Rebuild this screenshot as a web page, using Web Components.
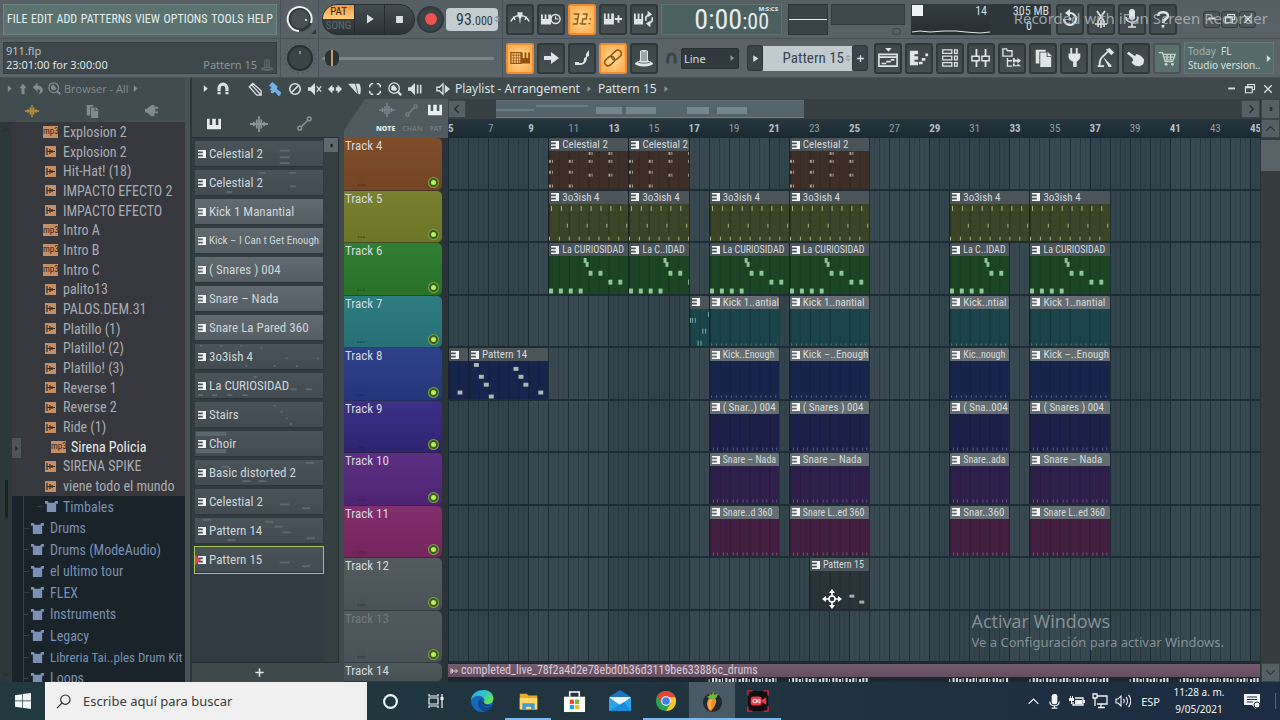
<!DOCTYPE html>
<html lang="es">
<head>
<meta charset="utf-8">
<title>911.flp - Playlist</title>
<style>
  html, body { margin: 0; height: 100%; background: #3c474a; }
  body { font-family: "Noto Sans", "Open Sans", sans-serif; overflow: hidden; }
</style>
</head>
<body>
<studio-app></studio-app>
<script>
const NARROW = '"Roboto Condensed", "Liberation Sans Narrow", "Liberation Sans", sans-serif';
const UI = '"Noto Sans", "Open Sans", sans-serif';
const BASE = `*{box-sizing:border-box} button,input,select{font:inherit;color:inherit;margin:0;padding:0;border:0;background:none} button{display:flex;align-items:center;justify-content:center}`;

function define(name, css, render) {
  customElements.define(name, class extends HTMLElement {
    constructor() { super(); this.attachShadow({ mode: 'open' }); }
    connectedCallback() {
      this.shadowRoot.innerHTML = `<style>${BASE}${css}</style>${render(this)}`;
    }
  });
}

/* ---------- icons: [viewBox size, markup] ---------- */
const S = 'fill="none" stroke="currentColor"';
const ICONS = {
  right: [16, '<path d="M5 2l7 6-7 6z"/>'],
  play: [16, '<path d="M4 2l9 6-9 6z"/>'],
  stop: [16, '<path d="M3 3h10v10H3z"/>'],
  up: [16, '<path d="M8 1l5 6H10v8H6V7H3z"/>'],
  undo: [16, '<path d="M7 1v3.500c5 0 7 3 6 7-.5 2-2 3-5 3.500 3-3 2.500-6-1-6V12L1 6.500z"/>'],
  zoom: [16, `<circle cx="7" cy="7" r="6" ${S} stroke-width="1.500"/><path d="M11 11l4 4" ${S} stroke-width="2.500"/><path d="M3.500 7c0-2 1.500-3.500 3.500-3.500L10.500 8c-1 3-7 3-7-1z"/>`],
  wave: [16, `<path d="M0 8h16M3.500 6v4M6 4v8M8 1v14M10 4v8M12.500 6v4" ${S} stroke-width="1.600"/>`],
  file: [16, '<path d="M2 1h8l-1 2H6v10H2zM7 4h4v4h4v8H7zM12 3l4 4h-4z"/>'],
  plugin: [16, '<path d="M0 6h2l5-4h3v2h4v2h-3v3h3v2h-4v3H7l-5-4H0z"/>'],
  magnet: [16, `<path d="M3.500 14V7a4.500 4.500 0 0 1 9 0v7" ${S} stroke-width="3.600"/><path d="M1 11h5M10 11h5" stroke="#3c474a" stroke-width="1"/>`],
  pencil: [16, `<path d="M1.500 5.500l4-4L15 10v5h-5zM4 3l10 11M2 5l4-3" ${S} stroke-width="1.500"/>`],
  brush: [16, '<path d="M1 4l4-4 6 5-1 3 5 4-1 3-2 1-4-5-3 2-2-1 1-3-2 0 2-3z"/>'],
  slash: [16, `<circle cx="8" cy="8" r="6" ${S} stroke-width="1.800"/><path d="M4 12l8-8" ${S} stroke-width="1.800"/>`],
  mute: [16, `<path d="M0 6h3l5-5v14l-5-5H0z"/><path d="M10 5l5 6M15 5l-5 6" ${S} stroke-width="1.500"/>`],
  slip: [16, '<path d="M0 8l5-5v3h2v4H5v3zM16 8l-5-5v3H9v4h2v3z"/>'],
  clipwave: [16, `<path d="M2 2v12M2 8h13M5 4v8M11 4l4 4-4 4" ${S} stroke-width="2"/>`],
  slice: [16, '<path d="M0 2h8l3 12zM9 2h4c2 3 2 8 1 12h-2z"/>'],
  select: [16, `<path d="M2 6V4l2-2h2M10 2h2l2 2v2M14 10v2l-2 2h-2M6 14H4l-2-2v-2" ${S} stroke-width="1.800"/>`],
  playback: [16, `<path d="M0 6h3l5-5v14l-5-5H0z"/><path d="M11 3v10M14.500 3v10" ${S} stroke-width="1.800"/>`],
  speaker: [16, `<path d="M1 6h3l4-4v12l-4-4H1z" ${S} stroke-width="1.500"/><path d="M10 3l6 5-6 5z"/>`],
  piano: [16, '<path d="M0 2h3v7h3V2h4v7h3V2h3v12H0z"/>'],
  auto: [16, `<path d="M5 11l6-6" ${S} stroke-width="1.600"/><circle cx="3" cy="13" r="2" ${S} stroke-width="1.500"/><circle cx="13" cy="3" r="2" ${S} stroke-width="1.500"/>`],
  metro: [24, `<path d="M1 15c2-4 5-7 9-7M23 15c-2-4-5-7-9-7M4 9l2 4M20 9l-2 4" ${S} stroke-width="1.800"/><path d="M9 4h6v4l-2 3-1 8-1-8-2-3z"/>`],
  pianoclock: [22, `<path d="M0 6h2v5h2V6h2v5h2V6h3v11H0z"/><circle cx="16" cy="11" r="5" ${S} stroke-width="1.600"/><path d="M16 8v3h3" ${S} stroke-width="1.200"/>`],
  count: [24, `<path d="M2 6h6l-1 6H3M7 12l-1 6H1M9 17.500h2M13 6h5l-1 6h-4l-1 6h5M20 17.500h2M21 12h2" ${S} stroke-width="1.700"/>`],
  pianoplus: [22, `<path d="M1 5h2v6h2V5h2v6h2V5h3v12H1z"/><path d="M17 7v8M13 11h8" ${S} stroke-width="2"/>`],
  pianoloop: [22, `<path d="M0 5h2v6h2V5h2v6h2V5h2v12H0z"/><path d="M13 13V9l3-3M20 9v4l-3 3" ${S} stroke-width="1.800"/><path d="M15 2l5 4-5 3zM18 13v7l-5-4z"/>`],
  typing: [22, `<path d="M1 5h11v12H1z" ${S} stroke-width="1.400"/><path d="M2 8h9M2 11h9M2 14h9M4 6v11M7 6v11M9.500 6v11" ${S} stroke-width=".8"/><path d="M12 5h2v6h2V5h2v6h2V5h2v12H12z"/>`],
  arrow: [20, '<path d="M3 8h7V4l8 6-8 6v-4H3z"/>'],
  slide: [20, '<path d="M6 15h4c2-1 2-3 2-5l2-1V6l3-4v6l-2 1c0 4-2 8-7 8H5zM3 14h4v3H3z"/>'],
  link: [20, `<g transform="rotate(-42 10 10)" ${S} stroke-width="1.600"><rect x="0" y="6.500" width="11" height="7" rx="3.500"/><rect x="9" y="6.500" width="11" height="7" rx="3.500"/></g>`],
  hat: [20, '<ellipse cx="10" cy="15.500" rx="9" ry="3"/><path d="M6 3c1-1.500 7-1.500 8 0v9l2 2c-2 2-10 2-12 0l2-2z"/><path d="M8 3v10M10 4v9M12 3v10M4 14c2 1.500 10 1.500 12 0" fill="none" stroke="#40494d" stroke-width=".8"/>'],
  back: [20, `<path d="M10 4a6 6 0 1 1-6 6" ${S} stroke-width="2.200"/><path d="M10 0v8L5 4z"/><circle cx="10" cy="10" r="1.500"/>`],
  cut: [20, `<path d="M6 2l7 10M14 2L7 12" ${S} stroke-width="1.800"/><path d="M4 15h12M7 12v6M10 11v8M13 12v6" ${S} stroke-width="1.600"/>`],
  mic: [20, `<rect x="7" y="0" width="6" height="11" rx="3"/><path d="M4 8c0 7 12 7 12 0M10 13v5M6 18h8" ${S} stroke-width="1.600"/>`],
  help: [20, `<path d="M5 7c0-5 10-5 10 0 0 3-5 3-5 7M10 16v2.500" ${S} stroke-width="2.600"/>`],
  playlist: [22, `<path d="M1 7h20v13H1zM1 10h20M4 17h5M9 15h5M14 13h4" ${S} stroke-width="1.800"/><path d="M8 0h7l-3.500 4z"/>`],
  roll: [22, '<path d="M1 3h9v4H6v2h4v4H6v2h4v4H1zM11 15h4v3h-4zM14 11h4v3h-4zM18 6h3v3h-3z"/>'],
  rack: [22, `<path d="M3 2h10v4H3zM3 9h10v4H3zM3 16h10v4H3zM16 2h3v4h-3zM16 9h3v4h-3zM16 16h3v4h-3z" ${S} stroke-width="1.400"/>`],
  mixer: [22, `<path d="M6 1v20M16 1v20" ${S} stroke-width="2"/><path d="M1 9h8v5H1zM12 9h8v5h-8z" fill="#40494d" stroke="currentColor" stroke-width="1.600"/>`],
  tree: [22, `<path d="M1 1h4l1 2h5v6H1zM6 11v9h5M6 14h5" ${S} stroke-width="1.500"/><path d="M12 11h2v2h3v-2l4 3-4 3v-2h-3v1h-2zM12 17h2v2h3v-2l4 3h-9z"/>`],
  copy: [22, '<path d="M3 2h11v2H7v13H3zM8 5h7v5h5v11H8zM16 4l5 5h-5z"/>'],
  plug: [22, '<path d="M7 0h2v6h4V0h2v6h3v3c0 4-3 5-4 6v6h-4v-6c-2-1-5-2-5-6V6h2z"/>'],
  mop: [22, `<path d="M3 20h7M5 19c0-6 2-9 5-11l4-4" ${S} stroke-width="2"/><path d="M12 2l4-2 5 5-3 3zM9 10l9 9v2h-3z"/>`],
  hand: [22, '<path d="M1 6l2-2 7 5 1-2c4 0 7 3 9 6l-1 5-4 2c-4 0-7-1-9-5l2-1-1-3z"/>'],
  cart: [22, `<path d="M2 5h4l3 10h9M6.500 7H20l-2 6H9M8 10h11M11 7v6M15 7v6" ${S} stroke-width="1.400"/><circle cx="10" cy="18" r="1.600"/><circle cx="17" cy="18" r="1.600"/>`],
  pattern: [10, '<path d="M0 0h10v10H0V8h6V6H0V4h6V2H0z"/>'],
  drum: [14, '<path d="M0 1h3l1 2h6l1-2h3v3h-2v9H2V4H0z"/>'],
  updown: [10, '<path d="M1 4l4-3 4 3zM1 6h8L5 9z"/>'],
  min: [16, '<path d="M3 6h9v2.500H3z"/>'],
  restore: [16, `<path d="M5 5V2h9v7h-3M2 5h9v8H2z" ${S} stroke-width="1.600"/><path d="M2 5h9v2H2z"/>`],
  close: [16, `<path d="M3 3l10 10M13 3L3 13" ${S} stroke-width="1.800"/>`],
  left: [16, `<path d="M10 3L5 8l5 5" ${S} stroke-width="1.800"/>`],
  next: [16, `<path d="M6 3l5 5-5 5" ${S} stroke-width="1.800"/>`],
  chevup: [16, `<path d="M2 11l6-6 6 6" ${S} stroke-width="1.500"/>`],
  chevdown: [16, `<path d="M2 5l6 6 6-6" ${S} stroke-width="1.500"/>`],
  dot: [16, '<path d="M6 5h4v6H6z"/>'],
  plus: [16, `<path d="M8 2v12M2 8h12" ${S} stroke-width="2.400"/>`],
  move: [20, '<path d="M10 2v16M2 10h16" stroke="#fff" stroke-width="1.600"/><path d="M10 0l3 4H7zM10 20l3-4H7zM0 10l4-3v6zM20 10l-4-3v6z"/><circle cx="10" cy="10" r="3" fill="#27343b" stroke="#fff" stroke-width="1.500"/>'],
  windows: [16, '<path d="M0 2.200L7 1.200v6.300H0zM7.700 1.100L16 0v7.500H7.700zM0 8.300h7v6.400L0 13.700zM7.700 8.300H16V16l-8.300-1.200z"/>'],
  search: [16, `<circle cx="10" cy="6" r="5" ${S} stroke-width="1.200"/><path d="M6.500 9.500L1 15" ${S} stroke-width="1.300"/>`],
  cortana: [16, `<circle cx="8" cy="8" r="6" ${S} stroke-width="2"/>`],
  taskview: [16, `<path d="M1 1v2h9V1M1 15v-2h9v2M1 5h9v6H1zM14 1v14" ${S} stroke-width="1.200"/><path d="M12.500 4h3v3h-3z"/>`],
  edge: [24, '<defs><linearGradient id="a" x1="0" y1="0" x2="1" y2=".6"><stop offset="0" stop-color="#2aa9dd"/><stop offset=".6" stop-color="#35c6c4"/><stop offset="1" stop-color="#6be04e"/></linearGradient></defs><circle cx="12" cy="12" r="11" fill="#1569b8"/><path d="M1 11C2-1 22-3 23.500 9c0 5-4 6.500-7 6-4-.6-2-2.500-2-4-.5-5-10-6-13.500 0z" fill="url(#a)"/><path d="M9 11c-3 5 1 11 7 11.500 3-1 5-3 6-5-5 2-10 0-10-5 0-1 .6-2 1-2.500-1-1-3-.5-4 1z" fill="#12488f"/><path d="M12 12c0 4 4 6 9 5l1 1-2-2c-3 .6-6-.6-6-2.500z" fill="#203945"/>'],
  folder: [24, '<path d="M2 3h8l2 2h10v16H2z" fill="#e7a92f"/><path d="M2 8h20v13H2z" fill="#ffd868"/><path d="M5 21v-7h14v7h-4v-3H9v3z" fill="#3f98d8"/>'],
  store: [24, '<path d="M7 7V2h10v5" fill="none" stroke="#fff" stroke-width="1.600"/><path d="M1 7h22v16H1z" fill="#fff"/><path d="M7 10h4.500v4.500H7z" fill="#e8502d"/><path d="M12.500 10H17v4.500h-4.500z" fill="#7db82c"/><path d="M7 15.500h4.500V20H7z" fill="#2a9de0"/><path d="M12.500 15.500H17V20h-4.500z" fill="#f6b91f"/>'],
  mail: [24, '<path d="M1 8l11-7 11 7v14H1z" fill="#1c74c4"/><path d="M2 8h20v10H2z" fill="#fff"/><path d="M1 8l11 8 11-8v14H1z" fill="#2ea3ea"/><path d="M1 22L16 13l7 9z" fill="#1a8bd8"/><path d="M2 8h20l-10 7z" fill="#e8f4fb"/>'],
  chrome: [24, '<circle cx="12" cy="12" r="11" fill="#2fa14f"/><path d="M2.500 6.500a11 11 0 0 1 19 0L22 8H12l-5 6z" fill="#e04536"/><path d="M22 7.500A11 11 0 0 1 12 23l5-8-1-7.500z" fill="#fbc52d"/><circle cx="12" cy="12" r="5.300" fill="#fff"/><circle cx="12" cy="12" r="4.200" fill="#3f7fe8"/>'],
  fruit: [24, '<circle cx="12" cy="13" r="10" fill="#1f2a30"/><path d="M8 9c3-3 8-1 8 3-1 4-3 8-6 10-4-3-5-9-2-13z" fill="#f58a22"/><path d="M9 11c1-2 2-2 3-2-2 4-2 8-1 13-4-4-4-8-2-11z" fill="#ffb652"/><path d="M9 3l2 2 2-3 1 3 4-1-2 4-4 2-3-1-3-2 3-1z" fill="#6fb53c"/>'],
  recorder: [24, '<rect x="1" y="1" width="22" height="22" rx="2" fill="#120d0f"/><path d="M1 6V1h5M18 1h5v5M23 18v5h-5M6 23H1v-5" fill="none" stroke="#d92b3a" stroke-width="1.500"/><rect x="4" y="7" width="12" height="10" rx="3" fill="#ef3548"/><path d="M16 11l5-3v8l-5-3z" fill="#ef3548"/><circle cx="8.500" cy="12" r="2" fill="none" stroke="#fff" stroke-width="1.100"/><path d="M10 12l4-2v4z" fill="none" stroke="#fff" stroke-width="1"/>'],
  traymic: [16, `<rect x="5" y="0" width="6" height="11" rx="2.500"/><path d="M3 8c0 6 10 6 10 0M8 12v3M5 15h6" ${S} stroke-width="1.200"/>`],
  battery: [16, `<path d="M6 5h8v7H4V9" ${S} stroke-width="1.300"/><path d="M6 7h7v4H6zM14 7h2v3h-2zM1 3h1v2h1V3h1v2h1v3H3v3H2V8H0V5h1z"/>`],
  monitor: [16, `<path d="M5 3h10v8H5M9 11v3M6 14.500h7M1 1h4v4H1zM3 5v8" ${S} stroke-width="1.300"/>`],
  volume: [16, `<path d="M1 6h2l3-3v10L3 10H1zM8.500 6c1 1 1 3 0 4M11 4c2 2 2 6 0 8M13.500 2c3 3 3 9 0 12" ${S} stroke-width="1.100"/>`],
  notify: [16, '<path d="M0 1h16v11h-4v4l-4-4H0z"/><path d="M3 4h10M3 6.500h10M3 9h6" stroke="#1d2c42" stroke-width="1"/><circle cx="13" cy="12" r="3" stroke="#1d2c42"/>'],
};

define('fl-icon', `:host{display:block;width:var(--s,16px);height:var(--s,16px);flex:none} svg{display:block;width:100%;height:100%;fill:currentColor}`, el => {
  const [box, body] = ICONS[el.getAttribute('name')];
  return `<svg viewBox="0 0 ${box} ${box}" aria-hidden="true">${body}</svg>`;
});
const icon = (name, size = 14, extra = '') => `<fl-icon name="${name}" style="--s:${size}px;${extra}"></fl-icon>`;

define('tool-button', `
  :host{display:block;width:28px;height:31px;flex:none}
  button{width:100%;height:100%;border:2px solid #2f383b;border-radius:3px;background:linear-gradient(#3d4649,#454f52);color:#dde5e6}
  :host([on]) button{border-color:#ee8a34;background:radial-gradient(#ffe0a0,#fdb356 75%);color:#93520d}
  :host([soft]) button{background:#5b716f;border-color:#465558;color:#c2d3d0}`,
  el => `<button aria-label="${el.getAttribute('label')}">${icon(el.getAttribute('icon'), 20)}</button>`);
const tool = (i, label, attr = '') => `<tool-button icon="${i}" label="${label}" ${attr}></tool-button>`;

/* ---------- top toolbar ---------- */
define('knob-dial', `:host{display:block;width:32px;height:34px} svg{display:block}`, el =>
  el.hasAttribute('ring')
  ? `<svg width="32" height="34" role="img" aria-label="Volume"><circle cx="16" cy="17" r="11" fill="#475154" stroke="#2e3739" stroke-width="3"/><path d="M15 29a12 12 0 1 1 12-8" fill="none" stroke="#eef2f2" stroke-width="2"/><circle cx="22" cy="18" r="1" fill="#fff"/><path d="M32 27v5h-5z" fill="#2e3739"/></svg>`
  : `<svg width="32" height="34" role="img" aria-label="Pitch"><circle cx="16" cy="17" r="15" fill="none" stroke="#353e41" stroke-width="1" stroke-dasharray="1 4"/><circle cx="16" cy="17" r="12" fill="#394245" stroke="#272f32" stroke-width="2"/><path d="M16 10v3" stroke="#d5dcdc" stroke-width="1"/></svg>`);

define('menu-bar', `
  :host{display:flex;align-items:center;justify-content:space-between;min-width:0;height:31px;padding:0 3px;background:#5a7370;border:1px solid #6f8582;color:#e6eded;font:12px ${NARROW}}
  button{line-height:20px}`,
  () => ['FILE', 'EDIT', 'ADD', 'PATTERNS', 'VIEW', 'OPTIONS', 'TOOLS', 'HELP'].map(t => `<button>${t}</button>`).join(''));

define('top-toolbar', `
  :host{display:grid;grid-template-columns:281px 38px 184px minmax(0,1fr);grid-template-rows:39px 39px;height:78px;flex:none;background:linear-gradient(#566064,#5b6569);color:#d9e0e1;position:relative;border-bottom:1px solid #2f383b}
  .cell{display:flex;align-items:center;padding:0 3px;min-width:0;border-right:1px solid #48525a;border-bottom:1px solid #48525a}
  .rest{border-right:0;gap:3px}
  menu-bar{flex:1}
  .info{flex:1;height:32px;background:#3e474b;border:1px solid #353e41;padding:1px 2px 0;font-size:11px;line-height:14px;color:#b9c3c6}
  .info p{margin:0}.info b{font-weight:400;color:#dce3e5}
  .info .hint{display:flex}.info .hint b{flex:1}.info .hint span{color:#89959a;padding-right:3px}.info fl-icon{color:#5c676b}
  .pill{display:flex;width:93px;height:31px;border-radius:15px;overflow:hidden;background:linear-gradient(#434c50,#2c3437);border:1px solid #272f32}
  .pill button{flex:1;border-left:1px solid #242c2f}
  .mode{display:flex;flex-direction:column;width:31px;font:11px/15px ${NARROW};text-align:center}
  .mode span{height:14px;line-height:14px}.mode .on{background:linear-gradient(#f3973f,#ffd080);color:#3a2508}.mode .off{color:#5d686c}
  .rec{width:27px;height:27px;border-radius:50%;background:#3a4347;border:2px solid #30383b;margin-left:2px}
  .rec i{width:12px;height:12px;border-radius:50%;background:#ef5350}
  .tempo{display:flex;align-items:center;justify-content:space-between;width:52px;height:23px;margin-left:2px;border-radius:4px;background:#c3cdd1;color:#333d42;padding:0 1px 0 10px;font:16px ${NARROW}}
  .tempo small{font-size:12px}
  .clock{width:121px;height:31px;background:#4b6061;border:1px solid #5f7372;display:flex;justify-content:flex-end;padding-right:12px;color:#e4ecec;font:28px/30px ${NARROW};position:relative}
  .clock small{font-size:22px;line-height:33px}
  .clock em{position:absolute;right:3px;top:0;font:700 6px/8px ${UI}}
  .scope{width:40px;height:31px;background:#3a4347;border:1px solid #2f373a;display:flex;align-items:center;margin-left:3px}
  .scope i{height:1px;flex:1;background:#e3e9e9}
  .meter{width:74px;height:31px;display:flex;flex-direction:column;align-items:flex-end;justify-content:space-between}
  .meter i{width:74px;height:21px;background:#3f494c;border:1px solid #333b3e}
  .meter b{width:9px;height:7px;border-radius:5px;border:1px solid #394245;margin-right:4px}
  .cpu{width:140px;height:31px;margin:0 2px 0 3px;background:#2d363a;display:grid;grid-template-columns:1fr 60px;color:#d5dcdd;font:12px/15px ${NARROW};text-align:right}
  .cpu div:first-child{background:linear-gradient(#333c40,#262e32);padding-right:3px;position:relative;margin-right:1px}
  .cpu div:last-child{padding-right:2px}.cpu p{margin:0}.cpu .zero{padding-right:17px}
  .cpu svg{position:absolute;left:1px;top:1px}
  .win{display:flex;gap:1px;margin-left:23px}
  .win button{width:17px;height:17px;border-radius:3px;border:1px solid #343d40;background:#4b5558;color:#e0e6e6}
  .fader{flex:1;display:flex;align-items:center}
  .fader input{-webkit-appearance:none;appearance:none;width:172px;height:16px}
  .fader input::-webkit-slider-runnable-track{height:3px;background:#7b8588;border-radius:2px}
  .fader input::-webkit-slider-thumb{-webkit-appearance:none;width:14px;height:16px;margin-top:-7px;border-radius:6px;background:linear-gradient(90deg,#2c3336 6px,#c99b64 6px 8px,#2c3336 8px)}
  .snap{display:flex;align-items:center;gap:3px;margin-left:4px;color:#3b4548}
  .drop{position:relative;display:flex;align-items:center;color:#8b969a}
  select{-webkit-appearance:none;appearance:none;width:58px;height:21px;background:#30393d;border:1px solid #273033;border-radius:2px;color:#d8dfe1;font:11px ${UI};padding-left:2px}
  .drop fl-icon{position:absolute;right:3px}
  .pat{display:flex;align-items:center;margin:0 3px 0 5px}
  .pat>button{width:16px;height:26px;background:#3b4448;border:1px solid #2e373a;border-radius:3px}
  .pat div{display:flex;align-items:center;justify-content:flex-end;width:89px;height:25px;background:#c0cacf;color:#3b474d;font:15px ${NARROW}}
  .news{flex:1;max-width:90px;height:32px;background:#556b6b;border:1px solid #627876;display:flex;align-items:center;justify-content:space-between;font-size:10px;line-height:14px;padding-left:3px;color:#d5e0df;white-space:nowrap}
  .news span span{color:#a0b2b1}
  .mark{position:absolute;right:12px;top:7px;font-size:15px;line-height:22px;color:#b6bdc0;opacity:.8;white-space:nowrap}
`, () => `
  <div class="cell"><menu-bar></menu-bar></div>
  <div class="cell"><knob-dial ring></knob-dial></div>
  <div class="cell">
    <div class="pill"><div class="mode"><span class="on">PAT</span><span class="off">SONG</span></div><button aria-label="Play">${icon('play', 12)}</button><button aria-label="Stop">${icon('stop', 11)}</button></div>
    <button class="rec" aria-label="Record"><i></i></button>
    <div class="tempo"><span>93<small>.000</small></span>${icon('updown', 8, 'color:#8f9ba1')}</div>
  </div>
  <div class="cell rest">
    ${tool('metro', 'Metronome')}${tool('pianoclock', 'Wait for input')}${tool('count', 'Countdown', 'on')}${tool('pianoplus', 'Blend recording')}${tool('pianoloop', 'Loop recording')}
    <div class="clock"><span>0:00</span><small>:00</small><em>M:S:CS</em></div>
    <div class="scope"><i></i></div><div class="meter"><i></i><b></b></div>
    <div class="cpu"><div><p>14</p><svg width="78" height="29" aria-hidden="true"><path d="M0 0h11v11H0z" fill="#eef2f2"/><path d="M0 27l8-1 10 1 14-1 12 0 10 1 14 1 10-1" fill="none" stroke="#dfe6e6"/></svg></div><div><p>305 MB</p><p class="zero">0</p></div></div>
    ${tool('back', 'Undo')}${tool('cut', 'Cut')}${tool('mic', 'Record audio')}${tool('help', 'Help')}
    <div class="win"><button aria-label="Minimize">${icon('min', 12)}</button><button aria-label="Restore">${icon('restore', 12)}</button><button aria-label="Close">${icon('close', 12)}</button></div>
  </div>
  <div class="cell"><div class="info"><p>911.flp</p><p class="hint"><b>23:01:00 for 3:00:00</b><span>Pattern 15</span>${icon('hat', 14)}</p></div></div>
  <div class="cell"><knob-dial></knob-dial></div>
  <div class="cell"><label class="fader"><input type="range" value="2" aria-label="Song position"></label></div>
  <div class="cell rest">
    ${tool('typing', 'Typing keyboard', 'on')}${tool('arrow', 'Scroll')}${tool('slide', 'Slide')}${tool('link', 'Multilink', 'on')}${tool('hat', 'Magic')}
    <div class="snap">${icon('magnet', 13)}<span class="drop"><select aria-label="Snap"><option>Line</option></select>${icon('right', 8)}</span></div>
    <div class="pat"><button aria-label="Patterns">${icon('play', 9)}</button><div>Pattern 15${icon('updown', 8, 'color:#9aa5aa')}</div><button aria-label="Add pattern">${icon('plus', 9)}</button></div>
    ${tool('playlist', 'Playlist')}${tool('roll', 'Piano roll')}${tool('rack', 'Channel rack')}${tool('mixer', 'Mixer')}${tool('tree', 'Browser')}${tool('copy', 'Project')}${tool('plug', 'Plugins')}${tool('mop', 'Clean')}${tool('hand', 'Touch')}${tool('cart', 'Shop', 'soft')}
    <div class="news"><span><span>Today</span> &nbsp;FL<br>Studio version..</span>${icon('right', 9)}</div>
  </div>
  <div class="mark">Recorded with iFun Screen Recorder</div>`);

/* ---------- browser ---------- */
define('browser-row', `
  :host{display:flex;align-items:center;gap:5px;min-height:0;padding-left:33px;color:#a9acb3;font:14px ${NARROW};white-space:nowrap}
  .tag{width:11px;height:11px;background:#c58f66;color:#33241b;display:grid;place-items:center;font:9px/11px ${NARROW}}
  .box{width:15px;display:flex;justify-content:center;flex:none;margin-left:-2px}
  :host([mp3]) .tag{width:15px;height:12px}
  :host([sel]){padding-left:41px;color:#eceef0}
  :host([dir]){padding-left:19px;gap:6px;color:#7a90b4;background:linear-gradient(#33434b,#33434b) 12px 50%/5px 1px no-repeat}
  :host([dir="2"]){padding-left:33px;gap:5px;background-position:25px 50%}
  :host([tight]){font-size:13px}`,
  el => (el.hasAttribute('dir') ? icon('drum', 13) :
    `<span class="box"><span class="tag">${el.hasAttribute('mp3') ? 'mp3' : '<svg width="9" height="9" viewBox="0 0 9 9"><path d="M1 1v7M1 4.500h8M4 2v5M6 3v3" stroke="#3a271c" stroke-width="1.200" fill="none"/></svg>'}</span></span>`) + '<slot></slot>');

define('file-browser', `
  :host{display:grid;grid-template-rows:44px minmax(0,1fr);width:185px;flex:none;background:#414c4f;color:#7f8b8f}
  .head{display:flex;flex-direction:column}
  .crumb{display:flex;align-items:center;gap:3px;height:21px;padding-left:5px;font-size:11px}
  .crumb span{font-family:"Open Sans",sans-serif}
  .tabs{display:flex;align-items:center;justify-content:space-around;height:23px;padding:0 2px}
  .body{display:grid;grid-template-columns:12px minmax(0,1fr);min-height:0;background:#2d383a}
  .rail{display:flex;flex-direction:column;justify-content:space-between;align-items:center;color:#1d2628;padding:4px 0;position:relative}
  .rail i{position:absolute;left:5px;top:358px;width:3px;height:38px;background:#1a2224}
  .lists{display:grid;grid-template-rows:minmax(0,1fr) 186px;min-height:0}
  .files{display:grid;grid-auto-rows:minmax(0,1fr);background:#36383e;position:relative}
  .files .fold{position:absolute;left:0;top:316px;width:9px;height:20px;background:#50555a;color:#23282b}
  .dirs{display:grid;grid-template-rows:repeat(8,minmax(0,1fr)) 14px;background:#18242a linear-gradient(#33434b,#33434b) 11px 0/1px 100% no-repeat;overflow:hidden}
  .dirs browser-row:last-child{height:20px}`,
() => {
  const files = [['Explosion 2', 1], ['Explosion 2'], ['Hit-Hat! (18)'], ['IMPACTO EFECTO 2'], ['IMPACTO EFECTO'], ['Intro A', 1], ['Intro B', 1], ['Intro C', 1], ['palito13'], ['PALOS.DEM.31'], ['Platillo (1)'], ['Platillo! (2)'], ['Platillo! (3)'], ['Reverse 1'], ['Reverse 2'], ['Ride (1)'], ['Sirena Policia', 1, 1], ['SIRENA SPIKE'], ['viene todo el mundo']];
  const dirs = ['Timbales', 'Drums', 'Drums (ModeAudio)', 'el ultimo tour', 'FLEX', 'Instruments', 'Legacy', 'Libreria Tai..ples Drum Kit', 'Loops'];
  return `<div class="head"><div class="crumb">${icon('right', 9)}${icon('up', 12)}${icon('undo', 13)}${icon('zoom', 13)}<span>Browser - All</span>${icon('right', 9)}</div>
    <div class="tabs">${icon('wave', 14, 'color:#b98f3c')}${icon('file', 14)}${icon('plugin', 15)}</div></div>
  <div class="body"><div class="rail">${icon('chevup', 8)}<i></i>${icon('chevdown', 8)}</div>
    <div class="lists"><div class="files">${files.map(([t, m, s]) => `<browser-row ${m ? 'mp3' : ''} ${s ? 'sel' : ''}>${t}</browser-row>`).join('')}<button class="fold" aria-label="Collapse">${icon('right', 7)}</button></div>
    <div class="dirs">${dirs.map((t, i) => `<browser-row dir="${i ? 1 : 2}" ${t.length > 20 ? 'tight' : ''}>${t}</browser-row>`).join('')}</div></div></div>`;
});

/* ---------- pattern picker ---------- */
define('pattern-item', `
  :host{display:flex;align-items:center;gap:3px;height:26px;padding-left:3px;background:linear-gradient(#49535a,#414b51);border-bottom:1px solid #2c353a;color:#ced6d8;font:13px ${NARROW};white-space:nowrap;position:relative}
  :host([lit]){background:linear-gradient(#606a70,#545e64)}
  :host([tight]){font-size:11px}
  :host([current]){outline:1px solid #a5c552;}
  svg{position:absolute;inset:0;width:100%;height:100%}
  fl-icon,slot{position:relative}
  i{position:absolute;left:0;border:solid transparent;border-width:5px 0 5px 6px;border-left-color:#e2405e}`,
  el => `<svg viewBox="0 0 127 26" preserveAspectRatio="none" fill="#5e696f" aria-hidden="true">${(el.dataset.n || '').split(' ').filter(Boolean).map(p => { const [x, y, w] = p.split(','); return `<rect x="${x}" y="${y}" width="${w || 8}" height="2"/>`; }).join('')}</svg>${icon('pattern', 8, 'color:#f0f4f4')}<slot></slot>${el.hasAttribute('current') ? '<i></i>' : ''}`);

define('pattern-picker', `
  :host{display:grid;grid-template-rows:59px minmax(0,1fr) 19px;width:152px;flex:none;color:#dde4e4}
  .tabs{display:flex;align-items:center;justify-content:space-between;padding:32px 32px 0 15px;color:#8a9598}
  .body{display:grid;grid-template-columns:minmax(0,1fr) 15px;background:#303b42;border:1px solid #273035;border-width:1px 1px 1px 0;padding-left:3px;width:147px}
  .list{display:flex;flex-direction:column;gap:3px;padding-top:3px}
  .bar{background:#353f42;margin-left:1px}
  .bar i{display:grid;place-items:center;height:14px;background:#5d696c;color:#1d2527}
  .add{padding-right:18px}`,
() => {
  const dots = '5,1,2 25,1,2 45,1,2 65,3,2 90,14,2 50,22,2 78,22,2 100,22,2 121,14,2';
  const rows = [['Celestial 2', '', '84,9,10 84,16,10 84,22,10'], ['Celestial 2', '', '64,2,6 94,2,6 94,16,6 31,22,6'], ['Kick 1 Manantial', 'lit', ''], ['Kick – I Can t Get Enough', 'lit tight', ''], ['( Snares ) 004', 'lit', ''], ['Snare – Nada', 'lit', ''], ['Snare La Pared 360', 'lit', ''], ['3o3ish 4', '', dots], ['La CURIOSIDAD', '', '3,22,5 17,22,5 32,22,5 47,22,5 58,3,4 95,16,6 110,16,6'], ['Stairs', '', '78,3,2 85,9,2 90,16,2 94,22,2'], ['Choir', '', '1,1,30 1,3,30 1,19,30 1,21,30'], ['Basic distorted 2', '', '110,2,8 47,21,8 63,21,8 26,6,8'], ['Celestial 2', '', '84,15,10 106,19,8'], ['Pattern 14', '', '8,1,8 70,3,8 79,8,8 87,14,8 111,20,8 32,22,8'], ['Pattern 15', 'current', '84,15,10 106,19,8']];
  return `<div class="tabs">${icon('piano', 14, 'color:#e8eeee')}${icon('wave', 18)}${icon('auto', 15)}</div>
  <div class="body"><div class="list">${rows.map(([t, a, n]) => `<pattern-item ${a} data-n="${n}">${t}</pattern-item>`).join('')}</div><div class="bar"><i>${icon('dot', 9)}</i></div></div>
  <button class="add" aria-label="Add">${icon('plus', 11)}</button>`;
});

/* ---------- playlist ---------- */
const HALF = 81; /* visible half bars */

const seq = (n, f) => Array.from({ length: n }, (_, i) => f(i)).join('');
const r = (x, y, w, h, o = 1) => `<rect x="${x}" y="${y}" width="${w}" height="${h}" opacity="${o}"/>`;
const SHAPES = {
  celestial: () => [[0, 11], [0, 22], [0, 36], [20, 11], [20, 22], [20, 36], [40, 3], [40, 11], [40, 25], [60, 3], [60, 11], [60, 25]].map(([x, y]) => r(x, y - 2, 2, 3, .85) + r(x + 3, y - 2, 1, 3, .85)).join(''),
  ish: () => seq(8, i => r(2 + i * 10, 2, 1, 5) + r(i * 10, 33, 1, 4)) + seq(4, i => r(18 + i * 20, 20, 1, 4)),
  cur: () => [[0, 33], [10, 33], [20, 33], [30, 33], [35, 2], [37, 6], [40, 15], [50, 15], [60, 24], [70, 24]].map(([x, y]) => r(x, y, x === 35 || x === 37 ? 3 : 4, 5)).join(''),
  ticks: () => seq(16, i => r(i * 5 + 1, 35, 1, 2, .5)),
  pairs: () => seq(8, i => r(i * 10 + 3, 34, 1, 3, .5) + r(i * 10 + 7, 34, 1, 3, .5)),
  fill: () => [[0, 9], [2, 9], [5, 9], [13, 20], [16, 20], [8, 32], [11, 32], [19, 3]].map(([x, y]) => r(x, y, 1, 5)).join(''),
  p14: () => [[5, 2], [10, 14], [15, 22], [20, 34], [45, 6], [50, 14], [55, 22], [70, 30]].map(([x, y]) => r(x, y, 5, 4)).join(''),
  p14a: () => r(9, 30, 5, 4),
  p15: () => r(40, 24, 5, 3) + r(50, 30, 5, 3),
};

define('pattern-clip', `
  :host{display:flex;flex-direction:column;min-width:0;min-height:0;border-left:1px solid #18232a;overflow:hidden}
  header{display:flex;align-items:center;gap:3px;height:13px;flex:none;padding-left:2px;background:var(--h,#4b5459);color:#d3dadc;font:11px/13px ${NARROW};white-space:nowrap;border-radius:2px 2px 0 0}
  :host([small]) header{font-size:10px}
  .body{flex:1;min-height:0;background:var(--c)}
  svg{display:block;width:100%;height:100%}`,
  el => {
    const bars = +el.dataset.len / 2;
    const kind = el.dataset.shape;
    return `<header>${icon('pattern', 8, 'color:#f4f7f7')}<slot></slot></header><div class="body"><svg viewBox="0 0 ${bars * 20} 38" preserveAspectRatio="none" fill="${el.dataset.ink}" aria-hidden="true"><g fill="#0a1418">${seq(bars * 2, i => r(i * 10, 0, 1, 38, i % 2 ? .18 : .38))}</g>${SHAPES[kind]()}</svg></div>`;
  });

define('track-head', `
  :host{display:block;position:relative;min-height:0;margin-right:1px;border-radius:0 5px 5px 0;background:linear-gradient(var(--c),var(--d));border-bottom:1px solid rgba(20,28,32,.5);color:#d5d8dc;font:13px/16px ${NARROW};padding-left:1px;overflow:hidden}
  :host([dim]){color:#70797d}
  i{position:absolute;right:4px;bottom:3px;width:9px;height:9px;border-radius:50%;background:#b3f05c;border:2px solid #3d5a24;box-shadow:0 0 0 1px #7da33e}
  span{position:absolute;left:13px;bottom:4px;font:700 10px/8px ${UI};color:#20282c;opacity:.6}
  :host([cut]) i,:host([cut]) span{display:none}`,
  () => `<slot></slot><span aria-hidden="true">...</span><i></i>`);

define('grid-lines', `:host{display:block} svg{display:block;width:100%;height:100%}`, () => {
  const p = i => (i * 100 / HALF) + '%';
  return `<svg aria-hidden="true">${seq(6, k => `<rect x="${p(8 + k * 16)}" width="${p(8)}" height="100%" fill="#fff" opacity=".03"/>`)}
  <g shape-rendering="crispEdges">${seq(HALF, i => `<rect x="${p(i)}" width="1" height="100%" fill="#14232b" opacity="${i % 8 === 0 ? .85 : i % 2 === 0 ? .7 : .35}"/>` + `<rect x="${p(i + .5)}" width="1" height="100%" fill="#14232b" opacity=".12"/>`)}</g></svg>`;
});

define('play-list', `
  :host{display:grid;grid-template-rows:21px minmax(0,1fr);flex:1;min-width:0;margin-left:-152px;pointer-events:none}
  .title{display:flex;align-items:center;gap:6px;height:21px;padding-left:9px;font-size:12px;color:#d9e0e2}
  .title .gap{width:6px}.title .end{flex:1}
  .title .tools{display:flex;gap:6px;align-items:center;width:229px}
  .title .wb{gap:6px;display:flex;padding-right:6px}
  .title .name{display:flex;align-items:center;gap:5px}
  .main{display:grid;grid-template-columns:104px minmax(0,1fr) 20px;grid-template-rows:20px 19px minmax(0,1fr);margin-left:152px;min-height:0}
  .corner{grid-row:1/3;background:#505b5f;clip-path:polygon(20% 0,100% 0,100% 100%,0 100%,0 80%);display:flex;flex-direction:column;align-items:flex-end;justify-content:space-between;padding:3px 6px 5px;color:#78848a}
  .corner div{display:flex;gap:10px;align-items:center}
  .corner .lab{gap:7px;font:700 7px/8px ${UI};color:#6d787c}.corner b{color:#dfe6e6}
  .mini{display:grid;grid-template-columns:18px minmax(0,1fr) 19px;background:#363f42;padding:1px 0}
  .mini button,.sq{background:#546064;border:1px solid #3b4649;color:#252d30;display:grid;place-items:center}
  .mini svg{display:block;width:100%;height:18px}
  .ruler{display:grid;grid-template-columns:repeat(${HALF},minmax(0,1fr));background:linear-gradient(#26363f,#1a2a33);align-items:center;font:11px ${NARROW};color:#8f9ca2;overflow:hidden}
  .ruler b{font:700 11px ${NARROW};color:#b4bfc3}
  .ruler span,.ruler b{white-space:nowrap}
  .heads,.lanes{display:grid;grid-template-rows:repeat(10,minmax(0,1fr)) 19px;min-height:0}
  .heads{background:#2a3438;padding-right:5px}
  .lanes{position:relative;background:#31434b;overflow:hidden}
  grid-lines{position:absolute;inset:0}
  .lane{position:relative;display:grid;grid-template-columns:repeat(${HALF},minmax(0,1fr));grid-template-rows:minmax(0,1fr);border-bottom:2px solid #1e2d35;min-height:0}
  .audio{position:relative;background:#1d272d;color:#d8cbd5;font:12px/13px ${NARROW};overflow:hidden}
  .audio header{display:flex;gap:3px;align-items:center;background:linear-gradient(#755d70,#644d60);height:13px;margin-top:1px;padding-left:2px;white-space:nowrap}
  .audio svg{display:block}
  .scroll{grid-row:1/4;grid-column:3;display:grid;grid-template-rows:20px 19px minmax(0,1fr) 19px;background:#343c3e;border-left:1px solid #2b3437}
  .scroll i{display:block;height:31px;margin-top:2px;background:#566266}
  .cursor{position:absolute;left:46%;top:451px;color:#fff}
  .note{position:absolute;right:36px;top:472px;color:rgba(190,200,205,.6);font:18px/22px "Open Sans",sans-serif;white-space:nowrap}
  .note p{margin:0}.note p+p{font:13px/20px ${UI}}
`, () => {
  const colors = [[4, '#7f4d2a', '#754423', '#3d2e28'], [5, '#79802f', '#6d7526', '#3a4426'], [6, '#2f7f32', '#287228', '#1c4524'], [7, '#2d7c80', '#277176', '#1b454b'], [8, '#2e4089', '#26367c', '#16254b'], [9, '#3d2f88', '#2e246f', '#1d2049'], [10, '#5c2f82', '#4d2573', '#2f1f4b'], [11, '#822f6e', '#75255d', '#421f40'], [12, '#525b60', '#495257', '#293439'], [13, '#50595e', '#495257', ''], [14, '#4f5a5c', '#465053', '']];
  const ink = { 4: '#b8b39b', 5: '#aab27a', 6: '#8cc693', 7: '#7db5ad', 8: '#aab8b4', 9: '#8d96c0', 10: '#9c89b8', 11: '#b487a8', 12: '#9fb49c' };
  const lit = '#646d71';
  /* start and length in half bars, note shape, name, header colour, small name */
  const clips = {
    4: [[10, 8, 'celestial', 'Celestial 2'], [18, 6, 'celestial', 'Celestial 2'], [34, 8, 'celestial', 'Celestial 2']],
    5: [[10, 8, 'ish', '3o3ish 4'], [18, 6, 'ish', '3o3ish 4'], [26, 8, 'ish', '3o3ish 4'], [34, 8, 'ish', '3o3ish 4'], [50, 8, 'ish', '3o3ish 4'], [58, 8, 'ish', '3o3ish 4']],
    6: [[10, 8, 'cur', 'La CURIOSIDAD', '', 1], [18, 6, 'cur', 'La C..IDAD', '', 1], [26, 8, 'cur', 'La CURIOSIDAD', '', 1], [34, 8, 'cur', 'La CURIOSIDAD', '', 1], [50, 6, 'cur', 'La C..IDAD', '', 1], [58, 8, 'cur', 'La CURIOSIDAD', '', 1]],
    7: [[24, 2, 'fill', ''], [26, 7, 'ticks', 'Kick 1..antial', lit], [34, 8, 'ticks', 'Kick 1..nantial', lit], [50, 6, 'ticks', 'Kick..ntial', lit], [58, 8, 'ticks', 'Kick 1..nantial', lit]],
    8: [[0, 2, 'p14a', ''], [2, 8, 'p14', 'Pattern 14'], [26, 7, 'ticks', 'Kick..Enough', lit, 1], [34, 8, 'ticks', 'Kick –..Enough', lit], [50, 6, 'ticks', 'Kic..nough', lit, 1], [58, 8, 'ticks', 'Kick –..Enough', lit]],
    9: [[26, 7, 'pairs', '( Snar..) 004', lit], [34, 8, 'pairs', '( Snares ) 004', lit], [50, 6, 'pairs', '( Sna..004', lit], [58, 8, 'pairs', '( Snares ) 004', lit]],
    10: [[26, 7, 'pairs', 'Snare – Nada', lit, 1], [34, 8, 'pairs', 'Snare – Nada', lit], [50, 6, 'pairs', 'Snare..ada', lit, 1], [58, 8, 'pairs', 'Snare – Nada', lit]],
    11: [[26, 7, 'pairs', 'Snare..d 360', lit, 1], [34, 8, 'pairs', 'Snare L..ed 360', lit, 1], [50, 6, 'pairs', 'Snar..360', lit], [58, 8, 'pairs', 'Snare L..ed 360', lit, 1]],
    12: [[36, 6, 'p15', 'Pattern 15', '', 1]],
  };
  const lane = ([n, , , body]) => `<div class="lane">${(clips[n] || []).map(([s, l, shape, name, h, small]) => `<pattern-clip ${small ? 'small' : ''} data-len="${l}" data-shape="${shape}" data-ink="${ink[n]}" style="grid-row:1;grid-column:${s + 1}/span ${l};--c:${body};${h ? `--h:${h}` : ''}">${name}</pattern-clip>`).join('')}</div>`;
  const runs = [[26, 7], [34, 8], [50, 6], [58, 8], [68, 4], [73, 8]];
  return `
  <div class="title"><div class="tools">${icon('right', 9)}${icon('magnet', 14)}<span class="gap"></span>${icon('pencil', 14)}${icon('brush', 14, 'color:#6fb3e6')}${icon('slash', 14)}${icon('mute', 14)}${icon('slip', 14)}${icon('slice', 14)}${icon('select', 14)}${icon('zoom', 14)}${icon('playback', 14)}</div>
    <div class="name">${icon('speaker', 14)}<span>Playlist - Arrangement</span>${icon('right', 8, 'color:#87939a')}<span>Pattern 15</span>${icon('right', 8, 'color:#87939a')}</div><span class="end"></span>
    <div class="wb">${icon('min', 12)}${icon('restore', 12)}${icon('close', 12)}</div></div>
  <div class="main">
    <div class="corner"><div>${icon('wave', 16)}${icon('auto', 13)}${icon('piano', 14, 'color:#e8eeee')}</div><div class="lab"><b>NOTE</b><span>CHAN</span><span>PAT</span></div></div>
    <div class="mini"><button aria-label="Scroll left">${icon('left', 12)}</button><div><svg viewBox="0 0 775 18" preserveAspectRatio="none" aria-hidden="true"><path d="M30 0h308v18H30z" fill="#55636a"/><path d="M30 0h308M30 17.500h308" stroke="#6e7c83"/><path d="M70 5h52v2H70zM30 9h38v2H30z" fill="#6b7980"/><path d="M130 7h26v7h-26zM160 7h30v7h-30zM221 7h22v7h-22zM251 7h30v7h-30z" fill="#77858c"/></svg></div><button aria-label="Scroll right">${icon('next', 12)}</button></div>
    <div class="ruler">${seq(21, i => { const t = i % 2 ? 'span' : 'b'; return `<${t} style="grid-column:${i * 4 + 1}/span ${i === 20 ? 1 : 4}">${5 + i * 2}</${t}>`; })}</div>
    <div class="heads">${colors.map(([n, c, d]) => `<track-head ${n === 13 ? 'dim' : ''} ${n === 14 ? 'cut' : ''} style="--c:${c};--d:${d}">Track ${n}</track-head>`).join('')}</div>
    <div class="lanes"><grid-lines></grid-lines>${colors.slice(0, 10).map(lane).join('')}
      <div class="audio"><header>${icon('clipwave', 8)}<span>completed_live_78f2a4d2e78ebd0b36d3119be633886c_drums</span></header><svg width="100%" height="5" aria-hidden="true">${runs.map(([s, l]) => seq(l * 3, i => `<rect x="${(s + i / 3) * 100 / HALF}%" y="${i % 3 ? 1 : 2}" width="${i % 4 ? 2 : 1}" height="4" fill="#d6dadb"/>`)).join('')}</svg></div>
      <div class="cursor">${icon('move', 20)}</div>
      <div class="note"><p>Activar Windows</p><p>Ve a Configuración para activar Windows.</p></div>
    </div>
    <div class="scroll"><button class="sq" aria-label="Options">${icon('dot', 10)}</button><button class="sq" aria-label="Scroll up">${icon('chevup', 11)}</button><i></i><button class="sq" aria-label="Scroll down">${icon('chevdown', 11)}</button></div>
  </div>`;
});

/* ---------- Windows taskbar ---------- */
define('task-bar', `
  :host{display:flex;align-items:stretch;height:38px;flex:none;background:linear-gradient(90deg,#203a40,#20353f 45%,#1c2c42);color:#f2f5f6;font-size:11px}
  .start{width:45px}
  .find{display:flex;align-items:center;gap:12px;width:322px;padding-left:11px;background:#f0f0f0;color:#2b2b2b}
  .find input{flex:1;min-width:0;font:13px ${UI};outline:0}
  .find input::placeholder{color:#3b3b3b;opacity:1}
  .app{width:46px;border-bottom:2px solid transparent;padding-top:2px}
  .run{border-bottom-color:#7ab8ee;box-shadow:inset 4px 0 0 #20353f,inset -4px 0 0 #20353f}
  .run.act{background:#4a5a65;box-shadow:none}
  .tray{display:flex;align-items:center;margin-left:auto;gap:7px}
  .tray span{padding:0 4px 0 3px}
  .time{width:56px;text-align:center;line-height:17px;font-size:10px}
  .note{width:42px;border-right:1px solid #56657a;margin-right:4px;padding-right:6px}`,
() => {
  const apps = [['cortana', 'Cortana', 17], ['taskview', 'Task View', 16], ['edge', 'Edge', 24], ['folder', 'Explorer', 21, 'run'], ['store', 'Store', 23], ['mail', 'Mail', 24], ['chrome', 'Chrome', 22, 'run'], ['fruit', 'FL Studio', 23, 'run act'], ['recorder', 'Recorder', 22, 'run']];
  return `<button class="start" aria-label="Inicio">${icon('windows', 16)}</button>
  <label class="find">${icon('search', 15)}<input type="text" placeholder="Escribe aquí para buscar" aria-label="Buscar"></label>
  ${apps.map(([i, l, s, c = '']) => `<button class="app ${c}" aria-label="${l}">${icon(i, s)}</button>`).join('')}
  <div class="tray">${icon('chevup', 13)}${icon('traymic', 15)}${icon('battery', 16)}${icon('monitor', 16)}${icon('volume', 16)}<span>ESP</span><div class="time">11:28 a. m.<br>9/05/2021</div><button class="note" aria-label="Notificaciones">${icon('notify', 16)}</button></div>`;
});

define('studio-app', `
  :host{display:flex;flex-direction:column;height:100vh;background:#3e494c;overflow:hidden;font-family:${UI}}
  main{display:flex;flex:1;min-height:0}
  .split{width:7px;flex:none;background:#465256;border-right:2px solid #2d3639}`,
  () => `<top-toolbar></top-toolbar><main><file-browser></file-browser><div class="split"></div><pattern-picker></pattern-picker><play-list></play-list></main><task-bar></task-bar>`);
</script>
</body>
</html>
